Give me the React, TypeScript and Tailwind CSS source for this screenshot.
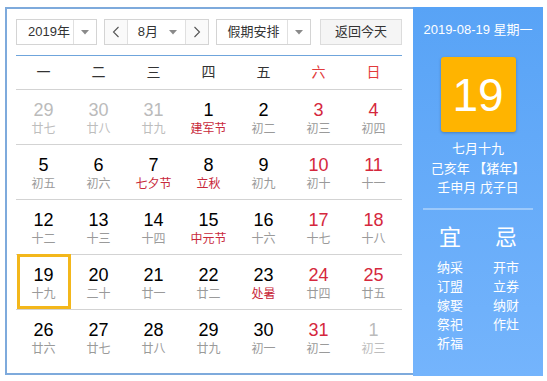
import React from "react";

type Day = { n: number; l: string; dim?: boolean; red?: boolean; fest?: boolean; sel?: boolean };

const weeks: Day[][] = [
  [
    { n: 29, l: "廿七", dim: true },
    { n: 30, l: "廿八", dim: true },
    { n: 31, l: "廿九", dim: true },
    { n: 1, l: "建军节", fest: true },
    { n: 2, l: "初二" },
    { n: 3, l: "初三", red: true },
    { n: 4, l: "初四", red: true },
  ],
  [
    { n: 5, l: "初五" },
    { n: 6, l: "初六" },
    { n: 7, l: "七夕节", fest: true },
    { n: 8, l: "立秋", fest: true },
    { n: 9, l: "初九" },
    { n: 10, l: "初十", red: true },
    { n: 11, l: "十一", red: true },
  ],
  [
    { n: 12, l: "十二" },
    { n: 13, l: "十三" },
    { n: 14, l: "十四" },
    { n: 15, l: "中元节", fest: true },
    { n: 16, l: "十六" },
    { n: 17, l: "十七", red: true },
    { n: 18, l: "十八", red: true },
  ],
  [
    { n: 19, l: "十九", sel: true },
    { n: 20, l: "二十" },
    { n: 21, l: "廿一" },
    { n: 22, l: "廿二" },
    { n: 23, l: "处暑", fest: true },
    { n: 24, l: "廿四", red: true },
    { n: 25, l: "廿五", red: true },
  ],
  [
    { n: 26, l: "廿六" },
    { n: 27, l: "廿七" },
    { n: 28, l: "廿八" },
    { n: 29, l: "廿九" },
    { n: 30, l: "初一" },
    { n: 31, l: "初二", red: true },
    { n: 1, l: "初三", dim: true },
  ],
];

const heads = ["一", "二", "三", "四", "五", "六", "日"];

function Caret() {
  return (
    <svg width="8" height="5" viewBox="0 0 8 5">
      <path d="M0 0 L8 0 L4 4.5 Z" fill="#8a8a8a" />
    </svg>
  );
}

function Chevron({ dir }: { dir: "l" | "r" }) {
  return (
    <svg width="8" height="12" viewBox="0 0 8 12">
      <path
        d={dir === "l" ? "M6.5 1 L1.5 6 L6.5 11" : "M1.5 1 L6.5 6 L1.5 11"}
        fill="none"
        stroke="#555"
        strokeWidth="1.1"
      />
    </svg>
  );
}

export default function App() {
  return (
    <div
      className="w-[547px] h-[381px] bg-white pt-[7px] pl-[5px] text-[#333]"
      style={{ fontFamily: '"Liberation Sans", "Noto Sans CJK SC", sans-serif' }}
    >
      <div className="flex h-[369px] w-[538px]">
        <div className="w-[408px] h-[368px] border-2 border-r-0 border-[#7eaadc] pl-[9px] pt-[10px]">
          {/* toolbar */}
          <div className="flex items-center h-[26px] w-[386px] text-[13px]">
            <div className="flex h-[26px] w-[81px] border border-[#d4d4d4] bg-white">
              <div className="w-[56px] flex items-center pl-[11px] text-[#333]">2019年</div>
              <div className="flex-1 border-l border-[#e0e0e0] flex items-center justify-center">
                <Caret />
              </div>
            </div>
            <div className="ml-[7px] flex h-[26px] w-[106px] border border-[#d4d4d4] bg-white">
              <div className="w-[22px] flex items-center justify-center bg-[#fafafa]">
                <Chevron dir="l" />
              </div>
              <div className="flex-1 border-l border-r border-[#e0e0e0] flex items-center pl-[10px] pr-[8px] justify-between">
                <span>8月</span>
                <Caret />
              </div>
              <div className="w-[22px] flex items-center justify-center bg-[#fafafa]">
                <Chevron dir="r" />
              </div>
            </div>
            <div className="ml-[7px] flex h-[26px] w-[95px] border border-[#d4d4d4] bg-white">
              <div className="w-[70px] flex items-center pl-[10px]">假期安排</div>
              <div className="flex-1 border-l border-[#e0e0e0] flex items-center justify-center">
                <Caret />
              </div>
            </div>
            <div className="ml-[9px] h-[26px] w-[82px] border border-[#dcdcdc] bg-[#f5f5f5] flex items-center justify-center">
              返回今天
            </div>
          </div>
          <div className="mt-[10px] h-px w-[386px] bg-[#6fa5dc]" />
          {/* weekday header */}
          <div className="flex h-[33px] w-[385px] items-center text-[14px]">
            {heads.map((h, i) => (
              <div
                key={h}
                className={`w-[55px] text-center ${i >= 5 ? "text-[#e23b3b]" : "text-[#333]"}`}
              >
                {h}
              </div>
            ))}
          </div>
          {weeks.map((w, wi) => (
            <div key={wi} className="flex h-[55px] w-[386px] border-t border-[#d3d3d3]">
              {w.map((d, di) => {
                const numColor = d.dim ? "text-[#bbbbbb]" : d.red ? "text-[#d5283d]" : "text-black";
                const lunColor = d.fest ? "text-[#c8293b]" : d.dim ? "text-[#bdbdbd]" : "text-[#9a9a9a]";
                return (
                  <div key={di} className="relative w-[55px] flex flex-col items-center pt-[9px]">
                    {d.sel && (
                      <div className="absolute left-px right-0 top-[-1px] h-[55px] border-[3px] border-[#f3b71b]" />
                    )}
                    <div className={`text-[18px] leading-[22px] ${numColor}`}>{d.n}</div>
                    <div className={`text-[12px] leading-[16px] ${lunColor}`}>{d.l}</div>
                  </div>
                );
              })}
            </div>
          ))}
        </div>
        <div className="w-[130px] h-[369px] bg-gradient-to-b from-[#58a3f6] to-[#74b4fc] flex flex-col items-center text-white">
          <div className="mt-[14px] text-[13px] leading-[18px]">2019-08-19 星期一</div>
          <div className="mt-[18px] w-[75px] h-[75px] rounded-[3px] bg-[#ffb400] shadow-[0_1px_3px_rgba(0,0,0,0.25)] flex items-center justify-center text-[46px] leading-none">
            19
          </div>
          <div className="mt-[7px] text-[13px] leading-[19.5px] text-center">
            <div>七月十九</div>
            <div>己亥年 【猪年】</div>
            <div>壬申月 戊子日</div>
          </div>
          <div className="mt-[10px] h-[2px] w-[110px] bg-[#9cc9fb]" />
          <div className="mt-[14px] flex w-[110px] justify-between px-[14px]">
            <div className="flex flex-col items-center">
              <div className="text-[22px] leading-[28px]">宜</div>
              <div className="mt-[6px] text-[13px] leading-[19px] text-center">
                <div>纳采</div>
                <div>订盟</div>
                <div>嫁娶</div>
                <div>祭祀</div>
                <div>祈福</div>
              </div>
            </div>
            <div className="flex flex-col items-center">
              <div className="text-[22px] leading-[28px]">忌</div>
              <div className="mt-[6px] text-[13px] leading-[19px] text-center">
                <div>开市</div>
                <div>立券</div>
                <div>纳财</div>
                <div>作灶</div>
              </div>
            </div>
          </div>
        </div>
      </div>
    </div>
  );
}
